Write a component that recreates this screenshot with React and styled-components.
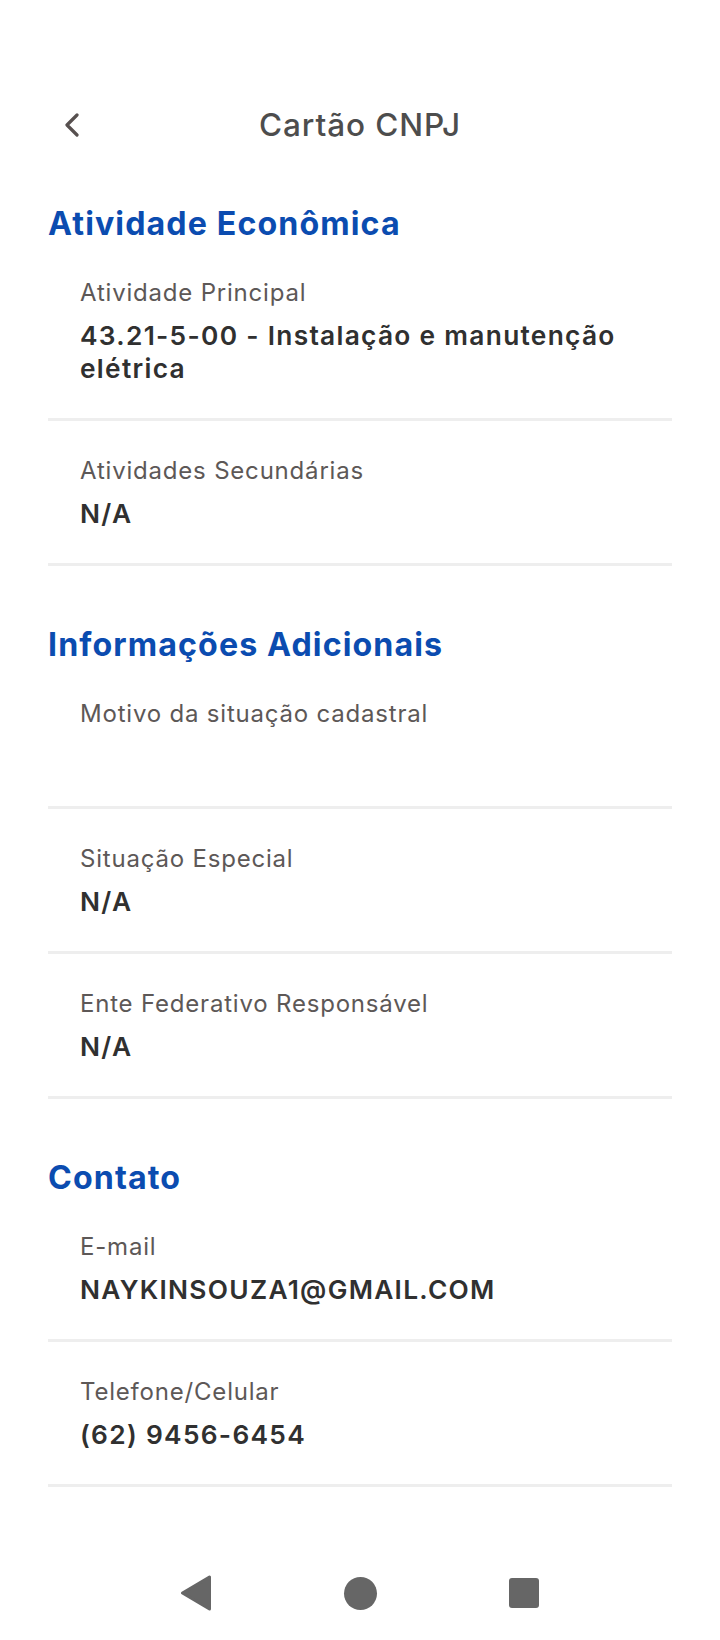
import React from "react";
import styled, { createGlobalStyle } from "styled-components";

const GlobalStyle = createGlobalStyle`
  * { box-sizing: border-box; }
  html, body { margin: 0; padding: 0; background: #ffffff; }
  body { font-family: Inter, "Open Sans", sans-serif; -webkit-font-smoothing: antialiased; }
`;

const Screen = styled.div`
  min-height: 1640px;
  display: flex;
  flex-direction: column;
  background: #ffffff;
`;

const Header = styled.header`
  margin-top: 96px;
  height: 57px;
  padding: 0 48px;
  display: grid;
  grid-template-columns: 48px 1fr 48px;
  align-items: center;
`;

const BackButton = styled.button`
  width: 48px;
  height: 48px;
  padding: 0;
  border: 0;
  background: transparent;
  display: flex;
  align-items: center;
  justify-content: center;
  cursor: pointer;
`;

const Title = styled.h1`
  margin: 0;
  text-align: center;
  font-size: 31.5px;
  font-weight: 500;
  letter-spacing: 0.9px;
  line-height: 40px;
  color: #4d4d4d;
`;

const Content = styled.main`
  flex: 1;
  padding: 51px 48px 0;
  display: flex;
  flex-direction: column;
  gap: 59px;
`;

const Section = styled.section`
  display: flex;
  flex-direction: column;
`;

const SectionTitle = styled.h2`
  margin: 0;
  font-size: 32.2px;
  font-weight: 700;
  letter-spacing: 1.1px;
  line-height: 39px;
  color: #0b4cb0;
`;

const Item = styled.div`
  padding: 33px 0 33px 32px;
  border-bottom: 3px solid #eeeeee;
  display: flex;
  flex-direction: column;
  gap: 10px;
`;

const Label = styled.div`
  font-size: 24px;
  font-weight: 400;
  letter-spacing: 0.8px;
  line-height: 33px;
  color: #5d5857;
`;

const Value = styled.div`
  min-height: 33px;
  font-size: 26.3px;
  font-weight: 600;
  letter-spacing: 1.3px;
  line-height: 33px;
  color: #303030;
`;

const NavBar = styled.nav`
  height: 94px;
  display: flex;
  justify-content: center;
  align-items: center;
`;

const NavSlot = styled.div`
  width: 164px;
  display: flex;
  justify-content: center;
  align-items: center;
`;

const HomeDot = styled.div`
  width: 33px;
  height: 33px;
  border-radius: 50%;
  background: #666666;
`;

const RecentSquare = styled.div`
  width: 30px;
  height: 30px;
  border-radius: 3px;
  background: #666666;
`;

const sections = [
  {
    title: "Atividade Econômica",
    items: [
      { label: "Atividade Principal", value: "43.21-5-00 - Instalação e manutenção elétrica" },
      { label: "Atividades Secundárias", value: "N/A" },
    ],
  },
  {
    title: "Informações Adicionais",
    items: [
      { label: "Motivo da situação cadastral", value: "" },
      { label: "Situação Especial", value: "N/A" },
      { label: "Ente Federativo Responsável", value: "N/A" },
    ],
  },
  {
    title: "Contato",
    items: [
      { label: "E-mail", value: "NAYKINSOUZA1@GMAIL.COM" },
      { label: "Telefone/Celular", value: "(62) 9456-6454" },
    ],
  },
];

function ChevronLeft() {
  return (
    <svg width="16" height="24" viewBox="0 0 16 24" fill="none">
      <polyline
        points="13,2 3,12 13,22"
        stroke="#57504f"
        strokeWidth="3.2"
        strokeLinecap="round"
        strokeLinejoin="round"
      />
    </svg>
  );
}

function BackTriangle() {
  return (
    <svg width="32" height="36" viewBox="0 0 32 36">
      <polygon
        points="2.5,18 29.5,2 29.5,34"
        fill="#666666"
        stroke="#666666"
        strokeWidth="3"
        strokeLinejoin="round"
      />
    </svg>
  );
}

export default function App() {
  return (
    <>
      <GlobalStyle />
      <Screen>
        <Header>
          <BackButton aria-label="Voltar">
            <ChevronLeft />
          </BackButton>
          <Title>Cartão CNPJ</Title>
          <span />
        </Header>
        <Content>
          {sections.map((s) => (
            <Section key={s.title}>
              <SectionTitle>{s.title}</SectionTitle>
              {s.items.map((it) => (
                <Item key={it.label}>
                  <Label>{it.label}</Label>
                  <Value>{it.value}</Value>
                </Item>
              ))}
            </Section>
          ))}
        </Content>
        <NavBar>
          <NavSlot>
            <BackTriangle />
          </NavSlot>
          <NavSlot>
            <HomeDot />
          </NavSlot>
          <NavSlot>
            <RecentSquare />
          </NavSlot>
        </NavBar>
      </Screen>
    </>
  );
}
